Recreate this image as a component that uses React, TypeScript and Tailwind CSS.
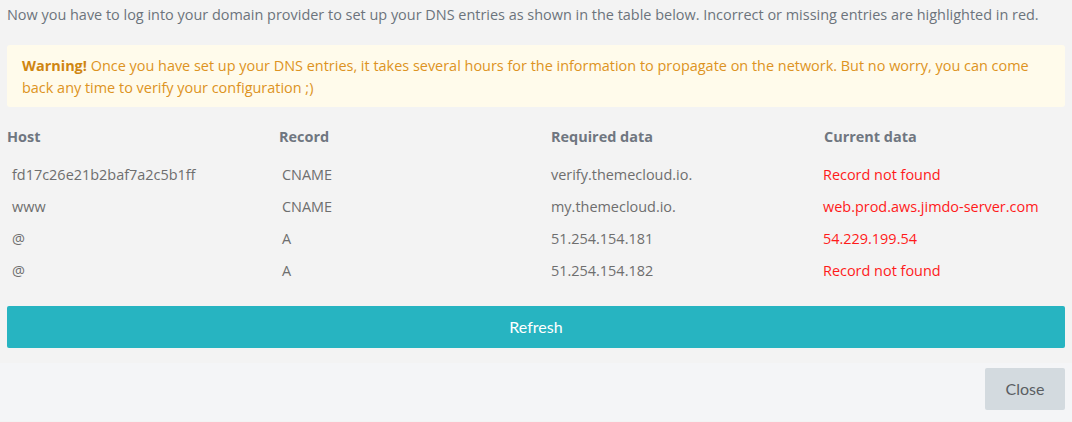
const rows = [
  { host: 'fd17c26e21b2baf7a2c5b1ff', record: 'CNAME', required: 'verify.themecloud.io.', current: 'Record not found' },
  { host: 'www', record: 'CNAME', required: 'my.themecloud.io.', current: 'web.prod.aws.jimdo-server.com' },
  { host: '@', record: 'A', required: '51.254.154.181', current: '54.229.199.54' },
  { host: '@', record: 'A', required: '51.254.154.182', current: 'Record not found' },
]

export default function App() {
  return (
    <div className="w-[1072px] h-[422px] overflow-hidden bg-[#f3f3f3] font-['Open_Sans',sans-serif] text-[14.45px] text-[#6c737c]">
      <div className="px-[7px] pt-[4px]">
        <p className="leading-[22px]">
          Now you have to log into your domain provider to set up your DNS entries as shown in the table below. Incorrect or missing entries are highlighted in red.
        </p>

        <div className="mt-[19px] h-[62px] rounded-[3px] bg-[#fffbeb] px-[15px] pt-[10px] leading-[22px] text-[#dd9322]">
          <strong className="font-bold text-[#cf8612]">Warning!</strong> Once you have set up your DNS entries, it takes several hours for the information to propagate on the network. But no worry, you can come back any time to verify your configuration ;)
        </div>

        <table className="mt-[19px] w-full table-fixed border-collapse">
          <thead>
            <tr className="text-left font-bold text-[#6f7680]">
              <th className="h-[33px] w-[272px] p-0 align-top">Host</th>
              <th className="h-[33px] w-[272px] p-0 align-top">Record</th>
              <th className="h-[33px] w-[272px] p-0 align-top">Required data</th>
              <th className="h-[33px] p-0 pl-[1px] align-top">Current data</th>
            </tr>
          </thead>
          <tbody className="text-[#6e6e6e]">
            {rows.map((r, i) => (
              <tr key={i} className="h-[32px]">
                <td className="pl-[5px]">{r.host}</td>
                <td className="pl-[3px]">{r.record}</td>
                <td>{r.required}</td>
                <td className="text-[#ff1a1a]">{r.current}</td>
              </tr>
            ))}
          </tbody>
        </table>

        <button
          type="button"
          className="mt-[19px] flex h-[42px] w-full items-center justify-center rounded-[2px] bg-[#27b4c1] font-['Lato',sans-serif] text-[16px] font-normal text-white"
        >
          Refresh
        </button>
      </div>

      <div className="mt-[15px] flex h-[58px] justify-end bg-[#f4f5f7] px-[7px] pt-[5px]">
        <button
          type="button"
          className="h-[42px] w-[80px] rounded-[2px] bg-[#d3dadf] font-['Lato',sans-serif] text-[16px] text-[#5a5e63]"
        >
          Close
        </button>
      </div>
    </div>
  )
}
